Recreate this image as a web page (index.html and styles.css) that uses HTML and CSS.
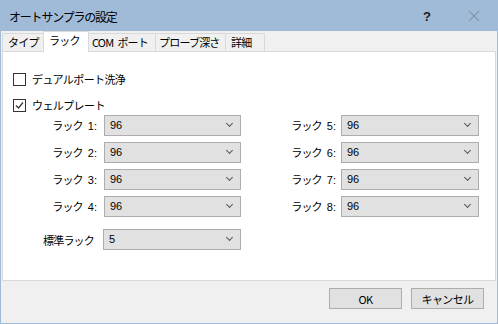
FILE: index.html
```html
<!DOCTYPE html>
<html lang="ja">

<head>
    <meta charset="UTF-8">
    <title>オートサンプラの設定</title>
    <link rel="stylesheet" href="styles.css">
</head>

<body>

    <div class="window">
        <div class="titlebar">
            <span class="title">オートサンプラの設定</span>
            <span class="help">?</span>
            <svg class="close" width="12" height="12" viewBox="0 0 12 12">
                <path d="M1 1 L11 11 M11 1 L1 11" stroke="#8797ab" stroke-width="1.1" fill="none" />
            </svg>
        </div>

        <div class="dialog-body">
            <div class="tabs">
                <div class="tab t1">タイプ</div>
                <div class="tab t2 active">ラック</div>
                <div class="tab t3">COM<span class="sp"></span>ポート</div>
                <div class="tab t4">プローブ深さ</div>
                <div class="tab t5">詳細</div>
            </div>

            <div class="panel">
                <label class="check-row">
                    <span class="checkbox"></span>
                    デュアルポート洗浄
                </label>
                <label class="check-row">
                    <span class="checkbox">
                        <svg width="11" height="11" viewBox="0 0 11 11">
                            <path d="M2 5.5 L4.5 8 L9 2.5" stroke="#333" stroke-width="1.2" fill="none" />
                        </svg>
                    </span>
                    ウェルプレート
                </label>

                <!-- rack combos -->
                <div class="rack-rows">
                    <div class="rack-row">
                        <span class="rack-label">ラック<span class="num">1:</span></span>
                        <div class="combo left">96</div>
                        <span class="rack-label right">ラック<span class="num">5:</span></span>
                        <div class="combo">96</div>
                    </div>
                    <div class="rack-row">
                        <span class="rack-label">ラック<span class="num">2:</span></span>
                        <div class="combo left">96</div>
                        <span class="rack-label right">ラック<span class="num">6:</span></span>
                        <div class="combo">96</div>
                    </div>
                    <div class="rack-row">
                        <span class="rack-label">ラック<span class="num">3:</span></span>
                        <div class="combo left">96</div>
                        <span class="rack-label right">ラック<span class="num">7:</span></span>
                        <div class="combo">96</div>
                    </div>
                    <div class="rack-row">
                        <span class="rack-label">ラック<span class="num">4:</span></span>
                        <div class="combo left">96</div>
                        <span class="rack-label right">ラック<span class="num">8:</span></span>
                        <div class="combo">96</div>
                    </div>
                </div>

                <div class="std-row">
                    <span class="std-label">標準ラック</span>
                    <div class="combo">5</div>
                </div>
            </div>

            <div class="footer">
                <button class="btn">OK</button>
                <button class="btn">キャンセル</button>
            </div>
        </div>
    </div>

</body>

</html>
```

FILE: styles.css
```css
* {
    box-sizing: border-box;
    margin: 0;
    padding: 0;
}

body {
    background-color: #ffffff;
    font-family: "Noto Sans CJK JP", "Liberation Sans", sans-serif;
    font-size: 11px;
    color: #000000;
}

.window {
    width: 498px;
    height: 324px;
    border: 1px solid #a0bbd8;
    display: flex;
    flex-direction: column;
    background-color: #f0f0f0;
}

.titlebar {
    height: 30px;
    flex-shrink: 0;
    background-color: #a0bbd8;
    display: flex;
    align-items: center;
    padding-left: 8px;
}

.titlebar .title {
    font-size: 12px;
    letter-spacing: -1.2px;
    flex: 1;
}

.titlebar .help {
    font-family: "Liberation Sans", sans-serif;
    font-size: 13px;
    font-weight: bold;
    color: #1a1a1a;
    margin-right: 37px;
}

.titlebar .close {
    margin-right: 17px;
}

.dialog-body {
    flex: 1;
    display: flex;
    flex-direction: column;
}

/* Tabs */
.tabs {
    height: 20px;
    flex-shrink: 0;
    display: flex;
    align-items: flex-end;
    padding-left: 1px;
}

.tab {
    flex-shrink: 0;
    height: 18px;
    border: 1px solid #d9d9d9;
    border-bottom: none;
    margin-right: -1px;
    padding: 0 0 0 5px;
    line-height: 16px;
    letter-spacing: -0.8px;
    white-space: nowrap;
    overflow: hidden;
    background-color: #f0f0f0;
}

.tab .sp {
    display: inline-block;
    width: 4px;
}

.tab.t1 {
    width: 42px;
}

.tab.t2 {
    width: 46px;
}

.tab.t3 {
    width: 68px;
    padding-left: 3px;
}

.tab.t4 {
    width: 71px;
    padding-left: 3px;
}

.tab.t5 {
    width: 40px;
}

.tab.active {
    height: 21px;
    margin-bottom: -1px;
    background-color: #ffffff;
    position: relative;
    z-index: 1;
    line-height: 17px;
}

/* Panel */
.panel {
    height: 230px;
    flex-shrink: 0;
    margin: 0 1px;
    background-color: #ffffff;
    border: 1px solid #d9d9d9;
    padding: 17px 0 0 0;
}

.check-row {
    height: 20px;
    display: flex;
    align-items: center;
    gap: 6px;
    padding-left: 10px;
    margin-bottom: 6px;
    letter-spacing: -0.6px;
}

.checkbox {
    width: 13px;
    height: 13px;
    border: 1px solid #333333;
    background-color: #ffffff;
    display: flex;
    align-items: center;
    justify-content: center;
}

.rack-rows {
    display: flex;
    flex-direction: column;
    gap: 6px;
    margin-top: -6px;
}

.rack-row {
    display: flex;
    height: 21px;
}

.rack-label {
    flex-shrink: 0;
    width: 101px;
    text-align: right;
    padding-right: 7px;
    line-height: 21px;
    letter-spacing: -0.8px;
}

.rack-label .num {
    margin-left: 5px;
    font-family: "Liberation Sans", sans-serif;
    letter-spacing: 0;
}

.rack-label.right {
    width: 100px;
    padding-right: 5px;
}

.combo {
    flex-shrink: 0;
    width: 138px;
    height: 21px;
    background-color: #e1e1e1;
    border: 1px solid #adadad;
    padding-left: 5px;
    line-height: 19px;
    font-family: "Liberation Sans", sans-serif;
    font-size: 11px;
    position: relative;
}

.combo.left {
    width: 137px;
}

.combo::after {
    content: "";
    position: absolute;
    right: 8px;
    top: 5px;
    width: 4px;
    height: 4px;
    border-right: 1px solid #555555;
    border-bottom: 1px solid #555555;
    transform: rotate(45deg);
}

.std-row {
    display: flex;
    align-items: center;
    margin-top: 12px;
}

.std-label {
    width: 100px;
    text-align: right;
    padding-right: 9px;
    letter-spacing: -0.8px;
}

/* Footer buttons */
.footer {
    display: flex;
    justify-content: flex-end;
    gap: 9px;
    padding: 7px 13px 0 0;
}

.btn {
    width: 73px;
    height: 21px;
    background-color: #e1e1e1;
    border: 1px solid #adadad;
    font-family: "Noto Sans CJK JP", "Liberation Sans", sans-serif;
    font-size: 11px;
    letter-spacing: -0.6px;
    color: #000000;
}
```
